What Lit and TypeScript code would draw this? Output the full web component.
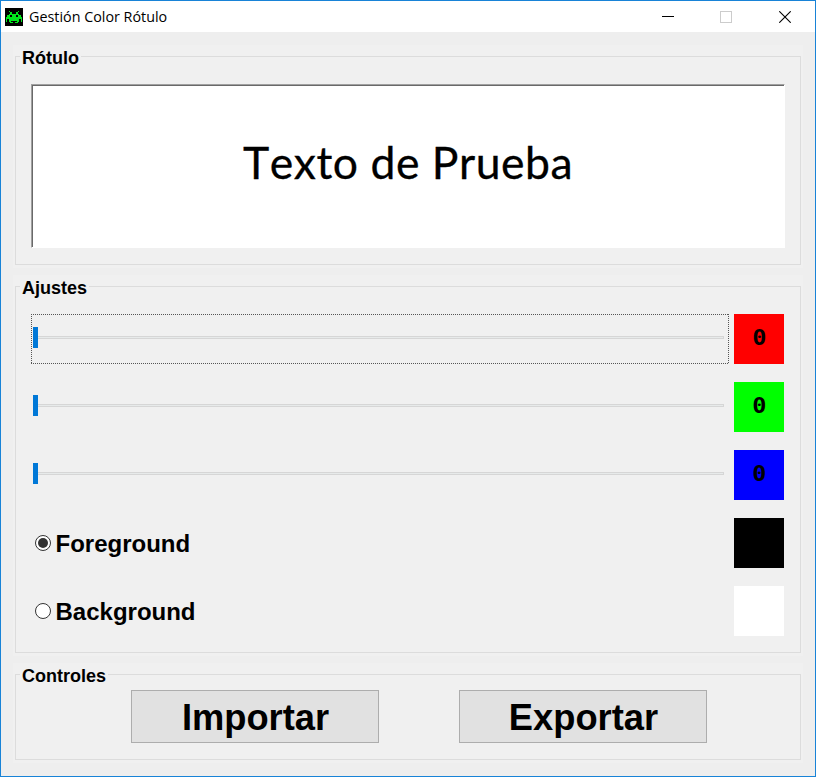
import { LitElement, html, css, svg } from "lit";
import { customElement, property } from "lit/decorators.js";

const INVADER = [
  "0001000000001000",
  "0000110000110000",
  "0000110000110000",
  "0001111111111000",
  "0111001111001110",
  "0111001111001110",
  "1111111111111111",
  "1111111111111111",
  "1001111111111001",
  "1001111111111001",
  "1001100000011001",
  "0000111001110000",
];

@customElement("title-bar")
class TitleBar extends LitElement {
  static styles = css`
    :host { display: flex; align-items: center; height: 31px; background: #fff; padding-left: 4px; }
    .logo { display: block; flex: none; }
    .title { flex: 1; font: 15px/20px "Open Sans", "Noto Sans", sans-serif; color: #000; padding: 0 0 2px 6px; white-space: nowrap; }
    .title span { display: inline-block; transform-origin: 0 50%; transform: scaleX(0.955); }
    .btn { width: 58px; display: flex; justify-content: center; }
    .btn.close { width: 60px; }
    svg { display: block; }
  `;
  render() {
    return html`
      <svg class="logo" width="18" height="18" viewBox="0 0 18 18" shape-rendering="crispEdges">
        <rect width="18" height="18" fill="#000" />
        <g transform="translate(1 3)" fill="#00e81c">
          ${INVADER.flatMap((row, y) =>
            [...row].map((c, x) => (c === "1" ? svg`<rect x=${x} y=${y} width="1" height="1" />` : null))
          )}
        </g>
      </svg>
      <div class="title"><span>Gestión Color Rótulo</span></div>
      <div class="btn">
        <svg width="12" height="12"><rect y="5" width="12" height="1" fill="#000" /></svg>
      </div>
      <div class="btn">
        <svg width="12" height="12"><rect x=".5" y=".5" width="11" height="11" fill="none" stroke="#ccc" /></svg>
      </div>
      <div class="btn close">
        <svg width="12" height="12"><path d="M.3 .3L11.7 11.7M11.7 .3L.3 11.7" fill="none" stroke="#000" stroke-width="1.1" /></svg>
      </div>
    `;
  }
}

@customElement("group-box")
class GroupBox extends LitElement {
  @property() label = "";
  static styles = css`
    :host { display: flex; box-sizing: border-box; background: #f0f0f0; padding: 11px 2px 3px; }
    .frame { flex: 1; border: 1px solid #dcdcdc; display: flex; flex-direction: column; }
    .legend {
      width: fit-content; margin: -10px 0 0 4px; padding: 0 2px; height: 22px;
      background: #f0f0f0; font: bold 18px/22px "Liberation Sans", Arial, sans-serif; white-space: nowrap;
    }
  `;
  render() {
    return html`<div class="frame"><div class="legend">${this.label}</div><slot></slot></div>`;
  }
}

@customElement("color-slider")
class ColorSlider extends LitElement {
  static styles = css`
    :host { display: flex; align-items: center; box-sizing: border-box; width: 698px; height: 50px; padding: 0 5px 0 2px; }
    :host([focused]) {
      --h: repeating-linear-gradient(90deg, #555 0 1px, transparent 1px 2px);
      --v: repeating-linear-gradient(180deg, #555 0 1px, transparent 1px 2px);
      background: var(--h) 0 0 / 100% 1px no-repeat, var(--h) 0 100% / 100% 1px no-repeat,
        var(--v) 0 0 / 1px 100% no-repeat, var(--v) 100% 0 / 1px 100% no-repeat;
    }
    .thumb { width: 5px; height: 21px; background: #0078d7; margin-top: -3px; }
    .track { flex: 1; box-sizing: border-box; height: 3px; margin-top: -3px; border: 1px solid #d6d6d6; border-left: 0; background: #e7eaea; }
  `;
  render() {
    return html`<div class="thumb"></div><div class="track"></div>`;
  }
}

@customElement("app-root")
class AppRoot extends LitElement {
  static styles = css`
    :host {
      display: flex; flex-direction: column; box-sizing: border-box; width: 816px; height: 777px;
      border: 1px solid #1883d7; background: #eee; color: #000; overflow: hidden;
      font-family: "Liberation Sans", Arial, sans-serif;
    }
    .content { display: flex; flex-direction: column; padding: 13px 12px 0; }
    .sample-box { height: 223px; }
    .adjust-box { height: 381px; margin-top: 7px; }
    .control-box { height: 100px; margin-top: 7px; }
    .sample {
      box-sizing: border-box; width: 754px; height: 164px; margin: 15px 0 0 15px; background: #fff;
      border: 1px solid #fff; border-top-color: #a0a0a0; border-left-color: #a0a0a0;
      box-shadow: inset 1px 1px #696969;
      display: flex; align-items: center; justify-content: center;
      font: 44.5px/60px Lato, "Open Sans", sans-serif; white-space: nowrap;
    }
    .sample span { display: block; margin-top: -9px; letter-spacing: 0.5px; font-kerning: none; -webkit-text-stroke: 0.3px #000; }
    .rows { display: flex; flex-direction: column; gap: 18px; margin: 15px 16px 0 15px; }
    .row { display: flex; justify-content: space-between; align-items: center; height: 50px; }
    .swatch {
      width: 50px; height: 50px; display: flex; align-items: center; justify-content: center;
      font: bold 21px/48px "DejaVu Sans Mono", monospace;
    }
    .swatch span { display: block; margin-top: -2px; padding-left: 1px; transform: scaleX(1.12); }
    .red { background: #f00; }
    .green { background: #0f0; }
    .blue { background: #00f; }
    .black { background: #000; }
    .white { background: #fff; }
    .radio { display: flex; align-items: center; padding-left: 4px; font-weight: bold; font-size: 24px; line-height: 28px; }
    .radio svg { display: block; margin-right: 4px; }
    .radio span { padding: 2px 0 0 0.5px; }
    .buttons { display: flex; gap: 80px; margin: 3px 0 0 115px; }
    .button {
      box-sizing: border-box; width: 248px; height: 53px; border: 1px solid #adadad; background: #e1e1e1;
      display: flex; align-items: center; justify-content: center; font-weight: bold; font-size: 36.3px; line-height: 44px;
      padding: 2px 0 0 1px;
    }
  `;
  slider(tone: string, focused: boolean) {
    return html`<div class="row">
      <color-slider ?focused=${focused}></color-slider>
      <div class="swatch ${tone}"><span>0</span></div>
    </div>`;
  }
  radio(label: string, tone: string, checked: boolean) {
    return html`<div class="row">
      <div class="radio">
        <svg width="16" height="16">
          <circle cx="8" cy="8" r="7.5" fill="#fff" stroke="#333" />
          ${checked ? svg`<circle cx="8" cy="8" r="5" fill="#333" />` : null}
        </svg>
        <span>${label}</span>
      </div>
      <div class="swatch ${tone}"></div>
    </div>`;
  }
  render() {
    return html`
      <title-bar></title-bar>
      <div class="content">
        <group-box class="sample-box" label="Rótulo">
          <div class="sample"><span>Texto de Prueba</span></div>
        </group-box>
        <group-box class="adjust-box" label="Ajustes">
          <div class="rows">
            ${this.slider("red", true)} ${this.slider("green", false)} ${this.slider("blue", false)}
            ${this.radio("Foreground", "black", true)} ${this.radio("Background", "white", false)}
          </div>
        </group-box>
        <group-box class="control-box" label="Controles">
          <div class="buttons">
            <div class="button">Importar</div>
            <div class="button">Exportar</div>
          </div>
        </group-box>
      </div>
    `;
  }
}
